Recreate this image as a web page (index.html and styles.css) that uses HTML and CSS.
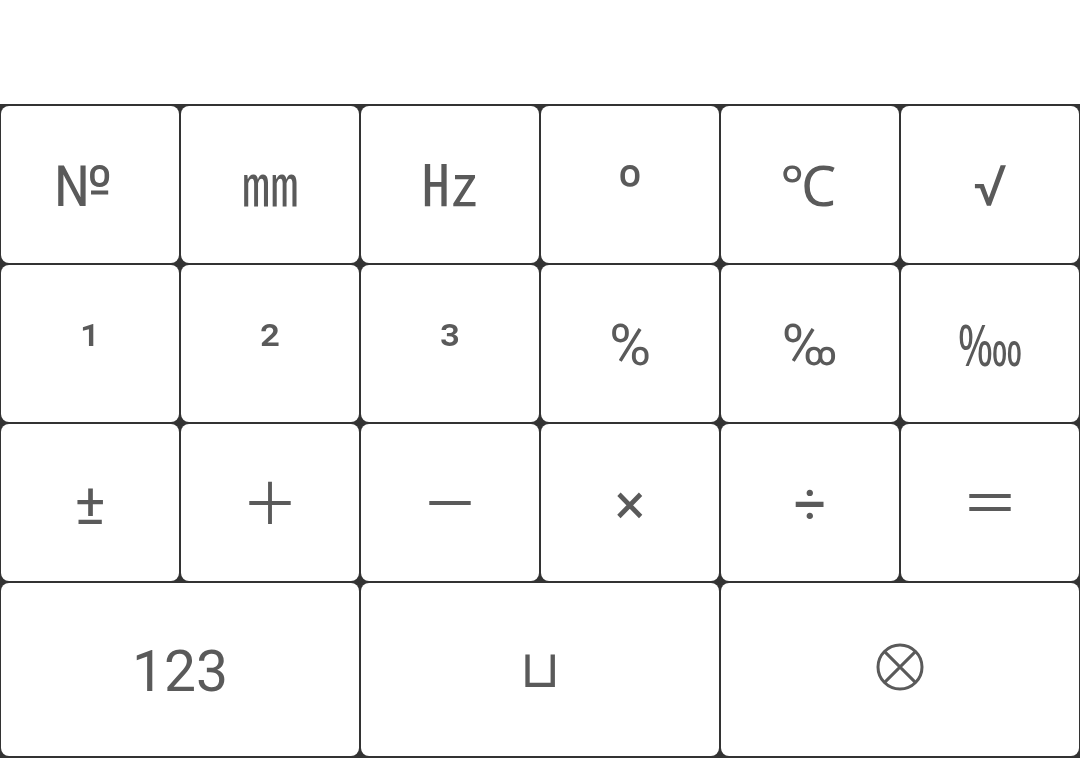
FILE: index.html
```html
<!DOCTYPE html>
<html lang="en">
<head>
<meta charset="utf-8">
<title>Symbols keyboard</title>
<link rel="stylesheet" href="styles.css">
</head>
<body>
<div class="spacer"></div>
<main class="keyboard">
  <div class="key">№&nbsp;</div><div class="key">㎜</div><div class="key">㎐</div><div class="key">º</div><div class="key celsius">℃</div><div class="key">√</div>
  <div class="key">¹</div><div class="key">²</div><div class="key">³</div><div class="key">%</div><div class="key">‰</div><div class="key flush"><span class="permyriad">‱</span></div>
  <div class="key">±</div><div class="key">＋</div><div class="key">－</div><div class="key">×</div><div class="key">÷</div><div class="key">＝</div>
  <div class="key wide">123</div><div class="key wide flush space">⊔</div>
  <div class="key wide flush">
    <svg class="cross-icon" viewBox="0 0 48 48" width="48" height="48" role="img" aria-label="⊗">
      <circle cx="24" cy="24" r="22" />
      <path d="M8.4 8.4 39.6 39.6M39.6 8.4 8.4 39.6" />
    </svg>
  </div>
</main>
</body>
</html>
```
FILE: styles.css
```css
* { box-sizing: border-box; }
html, body { margin: 0; padding: 0; height: 100%; background: #fff; overflow: hidden; }
body { display: flex; flex-direction: column; }
.spacer { height: 104px; flex: none; }
.keyboard {
  flex: 1;
  display: grid;
  grid-template-columns: repeat(6, 178px);
  grid-template-rows: 157px 157px 157px 173px;
  gap: 2px;
  padding: 2px 1px;
  background: #333;
}
.key {
  background: #fff;
  border-radius: 8px;
  padding-top: 4px;
  display: flex;
  align-items: center;
  justify-content: center;
  color: #5a5a5a;
  font: 400 57px/1 Roboto, "Noto Sans CJK SC", "DejaVu Sans", sans-serif;
}
.wide { grid-column: span 2; }
.flush { padding-top: 0; }
.space { font-size: 52px; }
.celsius { font: 400 56px/1 "Noto Sans", sans-serif; padding: 0 4px 2px 0; }
.permyriad { font: 400 56px/1 "Noto Sans", sans-serif; transform: scaleX(0.75); }
.cross-icon { fill: none; stroke: #5a5a5a; stroke-width: 3; margin-top: -6px; }
```
